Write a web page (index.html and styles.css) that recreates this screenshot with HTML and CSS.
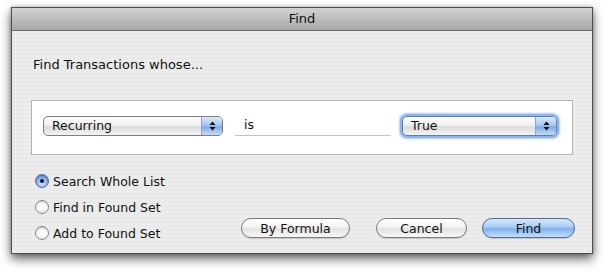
FILE: index.html
```html
<!DOCTYPE html>
<html lang="en">
<head>
    <meta charset="UTF-8">
    <title>Find</title>
    <link rel="stylesheet" href="styles.css">
</head>
<body>
    <div class="window">
        <div class="title-bar">Find</div>
        <div class="content">
            <p class="heading">Find Transactions whose...</p>
            <div class="criteria">
                <div class="popup popup-field">
                    <span class="popup-label">Recurring</span>
                    <span class="popup-arrows">
                        <svg width="7" height="10" viewBox="0 0 7 10"><path d="M3.5 0.5 L6.5 4 L0.5 4 Z M0.5 6 L6.5 6 L3.5 9.5 Z" fill="#111"/></svg>
                    </span>
                </div>
                <div class="operator">is</div>
                <div class="popup popup-value focused">
                    <span class="popup-label">True</span>
                    <span class="popup-arrows">
                        <svg width="7" height="10" viewBox="0 0 7 10"><path d="M3.5 0.5 L6.5 4 L0.5 4 Z M0.5 6 L6.5 6 L3.5 9.5 Z" fill="#111"/></svg>
                    </span>
                </div>
            </div>
            <div class="bottom">
                <ul class="scope">
                    <li class="scope-item"><span class="radio checked"></span>Search Whole List</li>
                    <li class="scope-item"><span class="radio"></span>Find in Found Set</li>
                    <li class="scope-item"><span class="radio"></span>Add to Found Set</li>
                </ul>
                <div class="buttons">
                    <button class="btn btn-formula">By Formula</button>
                    <button class="btn btn-cancel">Cancel</button>
                    <button class="btn btn-find">Find</button>
                </div>
            </div>
        </div>
    </div>
</body>
</html>
```

FILE: styles.css
```css
body {
    margin: 0;
    min-height: 272px;
    background: #fff;
    font-family: 'DejaVu Sans', 'Liberation Sans', sans-serif;
    font-size: 12px;
    color: #111;
}
.window {
    margin: 7px 0 0 11px;
    width: 582px;
    height: 247px;
    box-sizing: border-box;
    border: 1px solid #4d4d4d;
    background-color: #ececec;
    background-image: radial-gradient(#dedede 0.6px, transparent 0.8px);
    background-size: 4px 4px;
    box-shadow: 0 5px 10px rgba(0, 0, 0, 0.6), 0 0 4px rgba(0, 0, 0, 0.25);
}
.title-bar {
    height: 22px;
    line-height: 22px;
    text-align: center;
    font-size: 13px;
    background: linear-gradient(#d2d2d2, #a9a9a9);
    border-bottom: 1px solid #6b6b6b;
}
.content {
    padding: 26px 19px 0;
}
.heading {
    margin: 0;
    padding-left: 2px;
    line-height: 16px;
    font-size: 13px;
}
.criteria {
    margin-top: 27px;
    height: 55px;
    box-sizing: border-box;
    border: 1px solid #b3b3b3;
    background: #fff;
    display: flex;
    align-items: center;
    padding: 0 15px 3px 11px;
    gap: 11px;
}
.popup {
    height: 20px;
    box-sizing: border-box;
    border: 1px solid #7d7d7d;
    border-radius: 5px;
    display: flex;
    overflow: hidden;
    background: linear-gradient(#fdfdfd 0%, #f0f0f0 45%, #dcdcdc 55%, #f4f4f4 100%);
    font-size: 12.5px;
}
.popup-field {
    width: 180px;
    margin-right: 1px;
}
.popup-value {
    width: 155px;
}
.popup.focused {
    box-shadow: 0 0 0 2px #8db4ec, 0 0 2px 3px rgba(120, 165, 230, 0.6);
    border-color: #5c7fb5;
}
.popup-label {
    flex: 1;
    padding-left: 8px;
    line-height: 18px;
}
.popup-arrows {
    width: 20px;
    display: flex;
    align-items: center;
    justify-content: center;
    border-left: 1px solid #8aa6cc;
    background: linear-gradient(#dbe8fa 0%, #a9c8f2 45%, #7fabe9 55%, #c4dcf8 100%);
}
.operator {
    width: 156px;
    height: 20px;
    box-sizing: border-box;
    border-bottom: 1px solid #c4c4c4;
    padding-left: 9px;
    line-height: 18px;
    font-size: 12.5px;
}
.bottom {
    display: flex;
    justify-content: space-between;
    align-items: flex-end;
    margin-top: 13px;
}
.scope {
    list-style: none;
    margin: 0;
    padding: 0 0 0 4px;
}
.scope-item {
    height: 26px;
    display: flex;
    align-items: center;
    gap: 4px;
    font-size: 12.5px;
}
.radio {
    width: 14px;
    height: 14px;
    box-sizing: border-box;
    border: 1px solid #8a8a8a;
    border-radius: 50%;
    background: linear-gradient(#f2f2f2, #ffffff 60%, #e6e6e6);
    box-shadow: inset 0 1px 1px rgba(0, 0, 0, 0.2);
    display: flex;
    align-items: center;
    justify-content: center;
}
.radio.checked {
    border-color: #4d6d9c;
    background: radial-gradient(circle at 50% 70%, #cfe3fb, #7aa8e6 60%, #4b7fcf);
}
.radio.checked::after {
    content: '';
    width: 4px;
    height: 4px;
    border-radius: 50%;
    background: #111;
}
.buttons {
    display: flex;
    margin: 0 -2px 8px 0;
}
.btn {
    height: 20px;
    box-sizing: border-box;
    border: 1px solid #7c7c7c;
    border-radius: 10px;
    font-family: inherit;
    font-size: 12.5px;
    color: #111;
    padding: 0;
    background: linear-gradient(#ffffff 0%, #f3f3f3 45%, #e2e2e2 55%, #f8f8f8 100%);
    box-shadow: 0 1px 1px rgba(0, 0, 0, 0.15);
}
.btn-formula {
    width: 109px;
}
.btn-cancel {
    width: 91px;
    margin-left: 26px;
}
.btn-find {
    width: 93px;
    margin-left: 15px;
    border-color: #4f6c9c;
    background: linear-gradient(#d7e8fc 0%, #a8cbf5 45%, #7eb0ef 55%, #c3e0fc 100%);
}
```
